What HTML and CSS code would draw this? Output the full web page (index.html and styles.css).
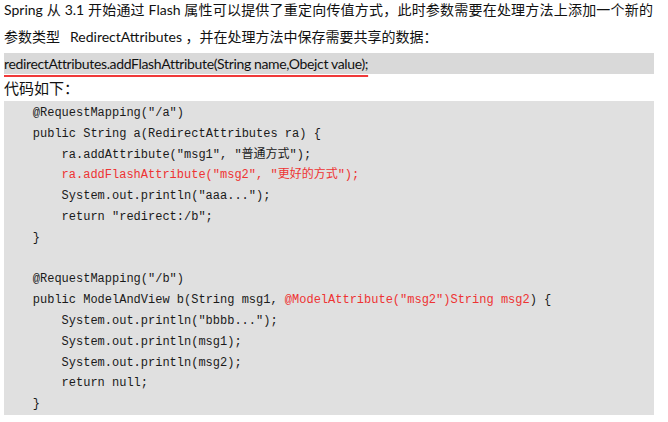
FILE: index.html
```html
<!DOCTYPE html>
<html lang="zh-CN">
<head>
<meta charset="utf-8">
<title>RedirectAttributes</title>
<link rel="stylesheet" href="styles.css">
</head>
<body>
<div class="page">
  <div class="line first">Spring 从 3.1 开始通过 Flash 属性可以提供了重定向传值方式，此时参数需要在处理方法上添加一个新的</div>
  <div class="line second">参数类型<span class="gap"></span>RedirectAttributes ，并在处理方法中保存需要共享的数据：</div>
  <div class="flash"><span class="flash-text">redirectAttributes.addFlashAttribute(String name,Obejct value);</span></div>
  <div class="line third">代码如下：</div>
  <div class="code">
    <div class="cl i1">@RequestMapping("/a")</div>
    <div class="cl i1">public String a(RedirectAttributes ra) {</div>
    <div class="cl i2">ra.addAttribute("msg1", "普通方式");</div>
    <div class="cl i2 hl">ra.addFlashAttribute("msg2", "更好的方式");</div>
    <div class="cl i2">System.out.println("aaa...");</div>
    <div class="cl i2">return "redirect:/b";</div>
    <div class="cl i1">}</div>
    <div class="cl"></div>
    <div class="cl i1">@RequestMapping("/b")</div>
    <div class="cl i1">public ModelAndView b(String msg1, <span class="hl">@ModelAttribute("msg2")String msg2</span>) {</div>
    <div class="cl i2">System.out.println("bbbb...");</div>
    <div class="cl i2">System.out.println(msg1);</div>
    <div class="cl i2">System.out.println(msg2);</div>
    <div class="cl i2">return null;</div>
    <div class="cl i1">}</div>
  </div>
</div>
</body>
</html>
```

FILE: styles.css
```css
html, body {
  margin: 0;
  padding: 0;
  background: #ffffff;
}

.page {
  width: 650px;
  padding: 0 0 0 4px;
  font-family: Lato, "Noto Sans CJK SC", sans-serif;
  font-size: 14px;
  color: #111111;
}

.line {
  height: 20px;
  line-height: 20px;
  white-space: nowrap;
}

.first {
  width: 649px;
  text-align: justify;
  text-align-last: justify;
}

.second {
  margin-top: 7px;
}

.gap {
  display: inline-block;
  width: 10px;
}

.flash {
  margin-top: 6px;
  height: 21px;
  line-height: 21px;
  background: #d9d9d9;
  white-space: nowrap;
  letter-spacing: -0.35px;
}

.flash-text {
  text-decoration: underline;
  text-decoration-color: #f03a3a;
  text-decoration-thickness: 2px;
  text-underline-offset: 6px;
}

.third {
  margin-top: 4px;
  font-size: 15px;
}

.code {
  margin-top: 3px;
  padding-top: 2px;
  background: #e0e0e0;
  font-family: "Liberation Mono", "Noto Sans CJK SC", monospace;
  font-size: 12px;
  line-height: 20.8px;
  color: #1a1a1a;
}

.cl {
  height: 20.8px;
  white-space: pre;
}

.i1 {
  padding-left: 28.8px;
}

.i2 {
  padding-left: 57.6px;
}

.hl {
  color: #ee3333;
}
```
